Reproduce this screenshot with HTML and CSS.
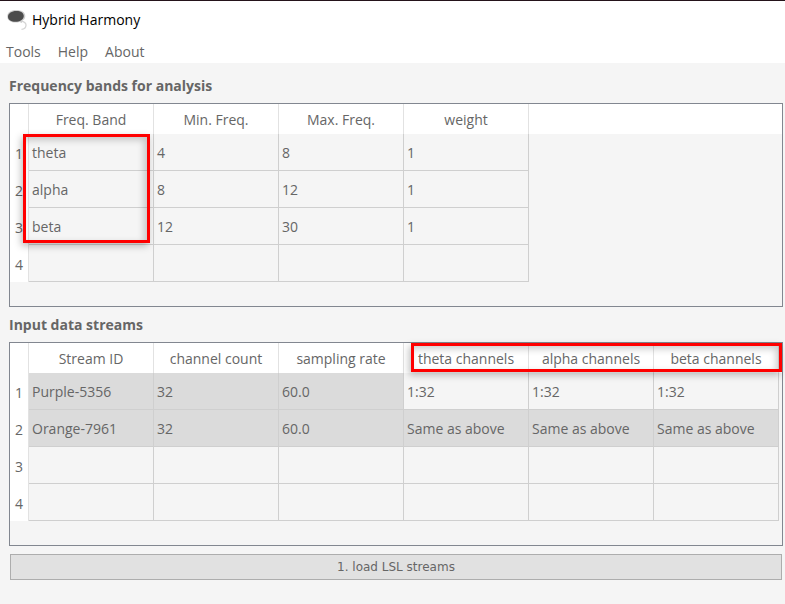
FILE: index.html
```html
<!DOCTYPE html>
<html lang="en">
<head>
<meta charset="utf-8">
<title>Hybrid Harmony</title>
<link rel="stylesheet" href="styles.css">
</head>
<body>
<header class="titlebar">
  <svg class="logo" viewBox="0 0 20 20" aria-hidden="true">
    <path d="M14 11 C17.500 11.500 19.300 13.500 19 15.500 C18.800 17.800 17 19.200 14.500 19.300" fill="none" stroke="#d4d4d4" stroke-width="1.300"/>
    <path d="M9 0 C14.500 0 18.300 2 18.300 6 C18.300 8 17.500 9.500 15.500 10.500 L14.800 13 L12.500 12 C7 13.500 .5 12 .2 6.500 C.2 2.300 4 0 9 0Z" fill="#cfcfcf"/>
    <path d="M9 1 C13.500 .8 16.800 2.800 16.800 6 C16.800 9.800 12.500 11.800 8.500 11.800 C4.300 11.800 1 10 1 6.700 C1 3.300 5 1 9 1Z" fill="#4c4c4c"/>
  </svg>
  <span>Hybrid Harmony</span>
</header>
<nav class="menubar">
  <button type="button">Tools</button>
  <button type="button">Help</button>
  <button type="button">About</button>
</nav>
<main>
  <h2 id="bands">Frequency bands for analysis</h2>
  <div class="panel">
    <table aria-labelledby="bands">
      <colgroup><col class="index"><col class="data"><col class="data"><col class="data"><col class="data"><col></colgroup>
      <thead><tr><th></th><th>Freq. Band</th><th>Min. Freq.</th><th>Max. Freq.</th><th>weight</th><td class="rest"></td></tr></thead>
      <tbody>
        <tr><th>1</th><td>theta</td><td>4</td><td>8</td><td>1</td><td class="rest"></td></tr>
        <tr><th>2</th><td>alpha</td><td>8</td><td>12</td><td>1</td><td class="rest"></td></tr>
        <tr><th>3</th><td>beta</td><td>12</td><td>30</td><td>1</td><td class="rest"></td></tr>
        <tr><th>4</th><td></td><td></td><td></td><td></td><td class="rest"></td></tr>
      </tbody>
    </table>
    <div class="mark mark-bands"></div>
  </div>
  <h2 id="streams">Input data streams</h2>
  <div class="panel">
    <table aria-labelledby="streams">
      <colgroup><col class="index"><col class="data"><col class="data"><col class="data"><col class="data"><col class="data"><col class="data"><col></colgroup>
      <thead><tr><th></th><th>Stream ID</th><th>channel count</th><th>sampling rate</th><th>theta channels</th><th>alpha channels</th><th>beta channels</th><td class="rest"></td></tr></thead>
      <tbody>
        <tr><th>1</th><td class="locked">Purple-5356</td><td class="locked">32</td><td class="locked">60.0</td><td>1:32</td><td>1:32</td><td>1:32</td><td class="rest"></td></tr>
        <tr><th>2</th><td class="locked">Orange-7961</td><td class="locked">32</td><td class="locked">60.0</td><td class="locked">Same as above</td><td class="locked">Same as above</td><td class="locked">Same as above</td><td class="rest"></td></tr>
        <tr><th>3</th><td></td><td></td><td></td><td></td><td></td><td></td><td class="rest"></td></tr>
        <tr><th>4</th><td></td><td></td><td></td><td></td><td></td><td></td><td class="rest"></td></tr>
      </tbody>
    </table>
    <div class="mark mark-channels"></div>
  </div>
  <button class="load" type="button">1. load LSL streams</button>
</main>
</body>
</html>
```
FILE: styles.css
```css
* { box-sizing: border-box; }

body {
  margin: 0;
  background: #f5f5f5;
  color: #666;
  font: 14px/20px "Open Sans", "Noto Sans", sans-serif;
}

.titlebar {
  display: flex;
  align-items: center;
  gap: 5px;
  height: 39px;
  padding: 0 7px;
  border-top: 1px solid #24131a;
  background: #fff;
  color: #000;
}

.logo { width: 20px; height: 20px; }

.menubar {
  display: flex;
  gap: 17px;
  height: 24px;
  padding: 3px 6px 1px;
  background: #fff;
}

.menubar button {
  padding: 0;
  border: 0;
  background: none;
  color: #666;
  font: inherit;
}

main { padding: 13px 2px 24px 9px; }

h2 {
  margin: 0 0 7px;
  font-size: 14px;
  line-height: 20px;
  font-weight: 700;
}

.panel {
  position: relative;
  margin-bottom: 8px;
  padding-bottom: 24px;
  border: 1px solid #828790;
}

table {
  width: 100%;
  table-layout: fixed;
  border-collapse: separate;
  border-spacing: 0;
}

.index { width: 19px; }
.data { width: 125px; }

th, td {
  height: 37px;
  padding: 2px 3px 0;
  border-right: 1px solid #cfcfcf;
  border-bottom: 1px solid #cfcfcf;
  text-align: left;
  font-weight: 400;
  white-space: nowrap;
}

th {
  border-right-color: #e2e2e2;
  border-bottom: 0;
  background: #fff;
  text-align: center;
}

tbody th { padding: 2px 0 0; }
thead th, thead td { height: 30px; }
.locked { background: #dbdbdb; }

.rest {
  padding: 0;
  border: 0;
}

thead .rest { background: #fff; }

/* Highlight frames lying over the tables */
.mark {
  position: absolute;
  border: 3px solid #f00;
  box-shadow: -2px 3px 7px rgba(0, 0, 0, .25), inset -3px 3px 7px rgba(0, 0, 0, .2);
  pointer-events: none;
}

.mark-bands { top: 30px; left: 13px; width: 127px; height: 109px; }
.mark-channels { top: 0; left: 401px; width: 371px; height: 29px; }

.load {
  display: block;
  width: calc(100% - 2px);
  height: 26px;
  margin: 0 1px;
  border: 1px solid #adadad;
  background: #e1e1e1;
  color: #666;
  font: 12px/20px "DejaVu Sans", sans-serif;
}
```
